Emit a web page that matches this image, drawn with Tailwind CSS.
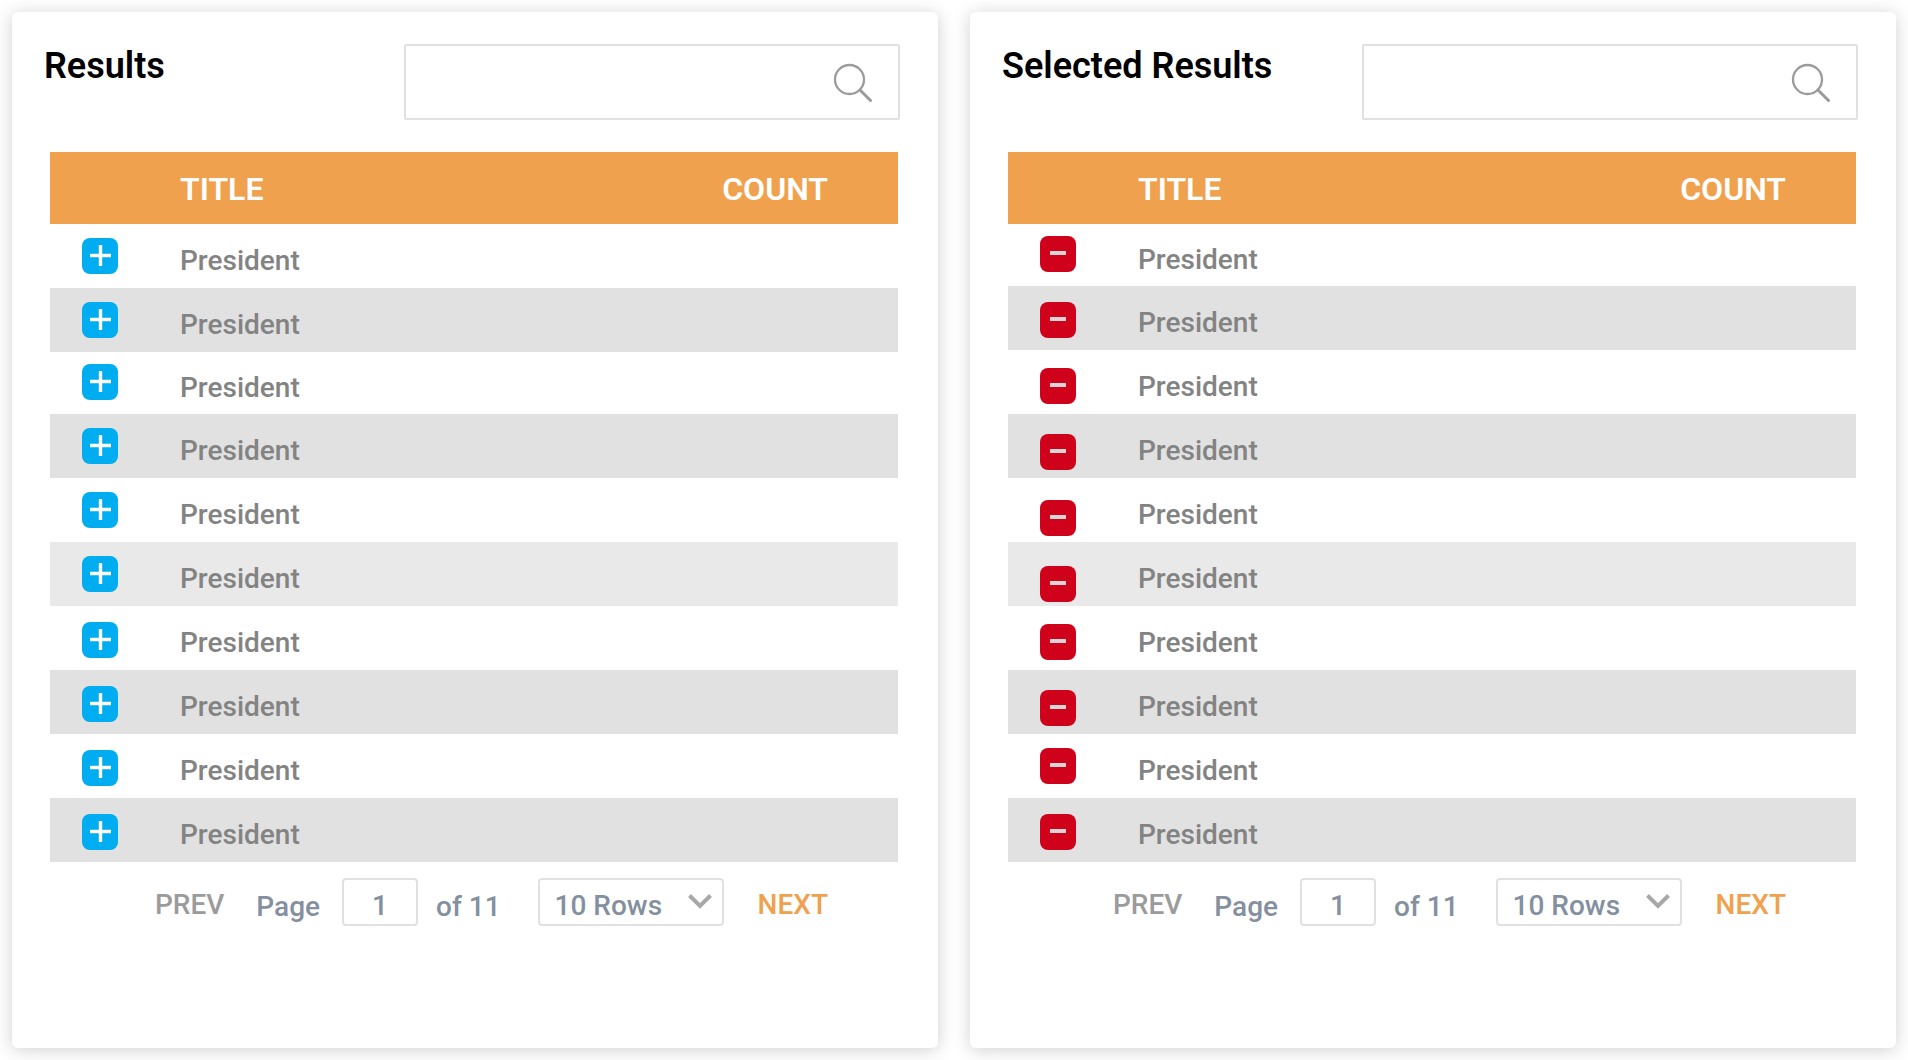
<!DOCTYPE html>
<html lang="en">
<head>
<meta charset="utf-8">
<meta name="viewport" content="width=device-width, initial-scale=1">
<title>Results</title>
<script src="https://cdn.jsdelivr.net/npm/@tailwindcss/browser@4"></script>
</head>
<body class="bg-white font-[Roboto,sans-serif]">
<main id="panels" class="grid min-h-screen grid-cols-2 gap-8 p-3"></main>
<script>
  // pad: top padding of the action cell, one entry per row
  const panels = [
    {
      id: 'results', heading: 'Results', label: 'Add President',
      button: 'block size-9 rounded-lg bg-[#00adf0]',
      icon: '<path d="M8 17.500h21M18.500 7v21" stroke="#fff" stroke-width="3.400"/>',
      rows: ['h-16', 'h-16', 'h-[62px]', 'h-16', 'h-16', 'h-16', 'h-16', 'h-16', 'h-16', 'h-16'],
      pad: ['pt-3.5', 'pt-3.5', 'pt-3', 'pt-3.5', 'pt-3.5', 'pt-3.5', 'pt-4', 'pt-4', 'pt-4', 'pt-4'],
    },
    {
      id: 'selected', heading: 'Selected Results', label: 'Remove President',
      button: 'block size-9 rounded-lg bg-[#d0011b]',
      icon: '<path d="M10 17h16" stroke="#dbd5d8" stroke-width="4"/>',
      rows: ['h-[62px]', 'h-16', 'h-16', 'h-16', 'h-16', 'h-16', 'h-16', 'h-16', 'h-16', 'h-16'],
      pad: ['pt-3', 'pt-4', 'pt-4.5', 'pt-5', 'pt-5.5', 'pt-6', 'pt-4.5', 'pt-5', 'pt-3.5', 'pt-4'],
    },
  ];
  const stripe = i => i % 2 === 0 ? 'bg-white' : i === 5 ? 'bg-[#e9e9e9]' : 'bg-[#e1e1e1]';

  document.getElementById('panels').innerHTML = panels.map(p => `
    <section class="rounded-md bg-white pt-8 pr-10 pb-8 pl-[38px] shadow-[0_2px_18px_rgba(0,0,0,0.19)]" aria-labelledby="${p.id}-heading">
      <header class="-mr-0.5 -ml-1.5 flex items-start justify-between">
        <h2 id="${p.id}-heading" class="text-4xl leading-[44px] font-semibold whitespace-nowrap text-black">${p.heading}</h2>
        <div class="relative w-[496px]">
          <input id="${p.id}-search" type="search" aria-label="Search ${p.heading}" class="block h-[76px] w-full appearance-none rounded-xs border-2 border-[#e1e1e1] bg-white pr-20 pl-4 text-[28px] text-[#838383] outline-none">
          <svg class="pointer-events-none absolute top-[19px] right-[27px] size-10" viewBox="0 0 40 40" fill="none" stroke="#9b9b9b" aria-hidden="true">
            <circle cx="16.500" cy="16.500" r="14.500" stroke-width="2.300"/>
            <path d="M27 27l10.500 10.500" stroke-width="3" stroke-linecap="round"/>
          </svg>
        </div>
      </header>
      <table class="mt-8 w-full table-fixed border-collapse">
        <thead>
          <tr class="h-[72px] bg-[#efa14e] text-[32px] leading-9 text-white">
            <td class="w-[130px] p-0"></td>
            <th scope="col" class="p-0 pt-0.5 text-left font-semibold">TITLE</th>
            <th scope="col" class="p-0 pt-0.5 pr-[70px] text-right font-semibold">COUNT</th>
          </tr>
        </thead>
        <tbody>${p.rows.map((h, i) => `
          <tr class="${h} ${stripe(i)}">
            <td class="p-0 pl-8 align-top ${p.pad[i]}"><button type="button" aria-label="${p.label}" class="${p.button}"><svg class="size-9" viewBox="0 0 36 36" fill="none" aria-hidden="true">${p.icon}</svg></button></td>
            <td class="p-0 pt-2.5 text-[28px] leading-9 font-medium text-[#838383]">President</td>
            <td class="p-0"></td>
          </tr>`).join('')}
        </tbody>
      </table>
      <nav aria-label="${p.heading} pages" class="mt-4 flex justify-end pr-[70px] text-[28px] leading-[48px] font-medium whitespace-nowrap text-[#8490a0]">
        <button type="button" class="mr-8 h-12 pt-[3px] text-[#9b9b9b]">PREV</button>
        <label for="${p.id}-page" class="mr-[22px] pt-[5px]">Page</label>
        <input id="${p.id}-page" type="text" value="1" class="h-12 w-[76px] rounded-sm border-2 border-[#e1e1e1] bg-white pt-2 text-center outline-none">
        <span class="mr-[37px] ml-[18px] pt-[5px]">of 11</span>
        <div class="relative mr-[34px]">
          <select id="${p.id}-rows" aria-label="Rows per page" class="h-12 w-[186px] appearance-none rounded-sm border-2 border-[#e1e1e1] bg-white pt-1.5 pl-[15px] leading-10 outline-none">
            <option>10 Rows</option>
          </select>
          <svg class="pointer-events-none absolute top-4 right-3 h-4 w-6" viewBox="0 0 24 16" fill="none" stroke="#a8a8a8" stroke-width="4" aria-hidden="true"><path d="M1.500 1.500L12 12L22.500 1.500"/></svg>
        </div>
        <button type="button" class="h-12 pt-[3px] text-[#efa14e]">NEXT</button>
      </nav>
    </section>`).join('');
</script>
</body>
</html>
